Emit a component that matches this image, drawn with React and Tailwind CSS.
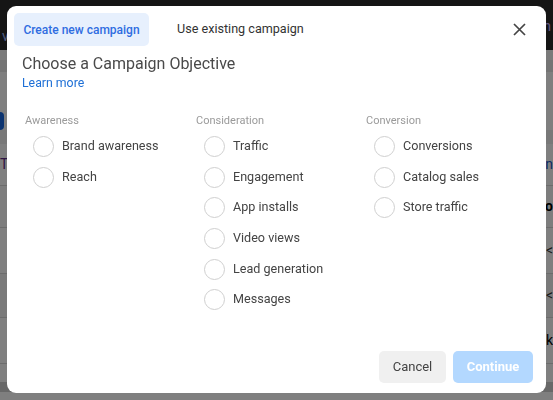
import { useState } from "react";

const columns = [
  { title: "Awareness", items: ["Brand awareness", "Reach"] },
  {
    title: "Consideration",
    items: ["Traffic", "Engagement", "App installs", "Video views", "Lead generation", "Messages"],
  },
  { title: "Conversion", items: ["Conversions", "Catalog sales", "Store traffic"] },
];

// page that sits behind the dimmed overlay
const BackgroundPage = () => (
  <div className="h-screen bg-white">
    <div className="h-[50px] bg-[#2b2b2b] flex items-center justify-between px-[2px] text-[#c9b3ff] text-[14px]">
      <span className="mt-[22px] text-[#9fb8ff]">v</span>
      <span className="mt-[2px]">h</span>
    </div>
    <div className="h-[10px] bg-[#f4f4f4]" />
    <div className="h-[12px] bg-[#e8e8e8]" />
    <div className="h-[40px]" />
    <div className="h-[18px] w-[4px] bg-[#1667e0] rounded-r" />
    <div className="h-[14px] bg-[#f0f0f0]" />
    <div className="h-[42px] flex items-center justify-between border-b border-[#d8d8d8] text-[14px]">
      <span className="text-[#5b2a86]">T</span>
      <span className="text-[#1a56c8]">n</span>
    </div>
    <div className="h-[42px] flex items-center justify-end border-b border-[#d8d8d8] text-[14px] font-bold text-black bg-[#fafafa]">
      o
    </div>
    <div className="h-[46px] flex items-center justify-end border-b border-[#d8d8d8] text-[14px] text-[#333]">
      &lt;
    </div>
    <div className="h-[44px] flex items-center justify-end border-b border-[#d8d8d8] text-[14px] text-[#333] bg-[#f4f4f4]">
      &lt;
    </div>
    <div className="h-[46px] flex items-center justify-end border-b border-[#d8d8d8] text-[14px] text-black">
      k
    </div>
    <div className="h-[18px]" />
    <div className="h-[10px] bg-[#d0d0d0]" />
  </div>
);

const Radio = ({ label, checked, onClick }) => (
  <button
    type="button"
    onClick={onClick}
    className="flex items-center h-[30.7px] pl-[8px] gap-[8px] text-left"
  >
    <span
      className={`size-[21px] rounded-full border ${
        checked ? "border-[#1a73e8] border-[6px]" : "border-[#cfcfcf]"
      } bg-white shrink-0`}
    />
    <span className="text-[12.6px] text-[#444] leading-none">{label}</span>
  </button>
);

export default function App() {
  const [tab, setTab] = useState("new");
  const [selected, setSelected] = useState(null);

  return (
    <div className="relative font-['Roboto',sans-serif]">
      <BackgroundPage />

      {/* dimmed overlay with the modal */}
      <div className="fixed inset-0 bg-black/50">
        <div className="ml-[7px] mt-[6px] w-[539px] h-[387px] bg-white rounded-[9px] flex flex-col">
          <div className="flex items-center pl-[7px] pt-[7px] pr-[19px]">
            <button
              type="button"
              onClick={() => setTab("new")}
              className={`h-[33px] w-[135px] rounded-[5px] text-[12px] ${
                tab === "new" ? "bg-[#e7f0fd] text-[#2f6de1] font-medium" : "text-[#333]"
              }`}
            >
              Create new campaign
            </button>
            <button
              type="button"
              onClick={() => setTab("existing")}
              className={`h-[33px] ml-[17px] px-[11px] rounded-[5px] text-[12.6px] ${
                tab === "existing" ? "bg-[#e7f0fd] text-[#2f6de1] font-medium" : "text-[#333]"
              }`}
            >
              Use existing campaign
            </button>
            <button type="button" className="ml-auto size-[16px] flex items-center justify-center">
              <svg width="13" height="13" viewBox="0 0 13 13" fill="none" stroke="#444" strokeWidth="1.7">
                <path d="M1 1L12 12M12 1L1 12" />
              </svg>
            </button>
          </div>

          <div className="pl-[15px] mt-[8px]">
            <h2 className="text-[16px] text-[#4a4a4a] leading-[20px]">Choose a Campaign Objective</h2>
            <a href="#" className="block text-[12.3px] text-[#1d6fd6] leading-[16px] mt-[1px]">
              Learn more
            </a>
          </div>

          <div className="grid grid-cols-[171px_170px_170px] pl-[18px] mt-[23px]">
            {columns.map((col) => (
              <div key={col.title} className="flex flex-col">
                <div className="text-[11px] text-[#9a9a9a] leading-[14px] mb-[3px]">{col.title}</div>
                {col.items.map((item) => (
                  <Radio
                    key={item}
                    label={item}
                    checked={selected === item}
                    onClick={() => setSelected(item)}
                  />
                ))}
              </div>
            ))}
          </div>

          <div className="mt-auto flex justify-end gap-[7px] pr-[13px] pb-[10px]">
            <button
              type="button"
              className="h-[32px] w-[67px] rounded-[5px] bg-[#f0f0f0] text-[13px] text-[#444]"
            >
              Cancel
            </button>
            <button
              type="button"
              disabled={!selected}
              className={`h-[32px] w-[80px] rounded-[5px] text-[13px] font-bold text-white ${
                selected ? "bg-[#1a73e8]" : "bg-[#b3d8ff]"
              }`}
            >
              Continue
            </button>
          </div>
        </div>
      </div>
    </div>
  );
}
